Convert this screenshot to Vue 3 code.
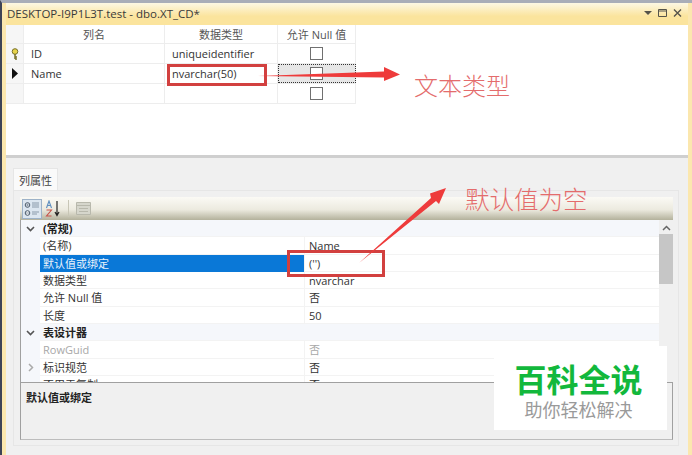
<script setup>
const columns = [
  { name: 'ID', type: 'uniqueidentifier', key: true },
  { name: 'Name', type: 'nvarchar(50)', current: true },
  { name: '', type: '' }
];

const props = [
  { label: '(常规)', group: true, open: true },
  { label: '(名称)', value: 'Name' },
  { label: '默认值或绑定', value: "('')", selected: true },
  { label: '数据类型', value: 'nvarchar' },
  { label: '允许 Null 值', value: '否' },
  { label: '长度', value: '50' },
  { label: '表设计器', group: true, open: true },
  { label: 'RowGuid', value: '否', muted: true },
  { label: '标识规范', value: '否', closed: true },
  { label: '不用于复制', value: '否' }
];
</script>

<template>
  <div class="screen">
    <div class="window">
      <div class="titlebar">
        <span class="title">DESKTOP-I9P1L3T.test - dbo.XT_CD*</span>
        <div class="controls">
          <svg width="8" height="4" viewBox="0 0 8 4"><path d="M0 0h8L4 4z" fill="#55534a" /></svg>
          <svg width="9" height="8" viewBox="0 0 9 8"><path d="M.5.500h8v7h-8zM.5 2h8" fill="none" stroke="#55534a" /></svg>
          <svg width="9" height="8" viewBox="0 0 9 8"><path d="M1 .5l7 7M8 .5l-7 7" fill="none" stroke="#55534a" stroke-width="1.400" /></svg>
        </div>
      </div>

      <div class="designer">
        <div class="table">
          <div class="row head">
            <div class="marker"></div>
            <div class="cell c-name center">列名</div>
            <div class="cell c-type center">数据类型</div>
            <div class="cell c-null center">允许 Null 值</div>
          </div>
          <div v-for="col in columns" :key="col.name" class="row">
            <div class="marker">
              <svg v-if="col.key" width="8" height="12" viewBox="0 0 8 12">
                <circle cx="4" cy="3.500" r="2.800" fill="#e8d44a" stroke="#77702a" />
                <path d="M4 6v5M4 9h2M4 11h2" stroke="#77702a" stroke-width="1.500" fill="none" />
              </svg>
              <svg v-if="col.current" width="7" height="11" viewBox="0 0 7 11"><path d="M1 0l6 5.500L1 11z" fill="#111" /></svg>
            </div>
            <div class="cell c-name">{{ col.name }}</div>
            <div class="cell c-type">{{ col.type }}</div>
            <div class="cell c-null center" :class="{ focus: col.current }"><span class="check"></span></div>
          </div>
        </div>
      </div>

      <div class="splitter"></div>

      <div class="lower">
        <div class="tab">列属性</div>
        <div class="tab-panel">
          <div class="toolbar">
            <div class="tool active">
              <svg width="16" height="16" viewBox="0 0 16 16">
                <circle cx="3.500" cy="4" r="2.300" fill="#fff" stroke="#456" />
                <circle cx="3.500" cy="12" r="2.300" fill="#fff" stroke="#456" />
                <path d="M2 4h3M3.500 2.500v3M2 12h3M8 2h7M8 4h7M8 6h7M8 11h7M8 13h5" stroke="#8a9aaa" fill="none" />
              </svg>
            </div>
            <div class="tool">
              <svg width="18" height="17" viewBox="0 0 18 17">
                <path d="M1.500 8l2.500-7 2.500 7M2.500 5.500h3" stroke="#5f8fc0" stroke-width="1.100" fill="none" />
                <path d="M1.500 10h5l-5 6h5" stroke="#c8524a" stroke-width="1.100" fill="none" />
                <path d="M12 1v14M10 12l2 3.500 2-3.500" stroke="#222" stroke-width="1.200" fill="none" />
              </svg>
            </div>
            <div class="sep"></div>
            <div class="tool">
              <svg width="15" height="13" viewBox="0 0 15 13">
                <path d="M.500.500h14v12H.500z" fill="#d6d6cc" stroke="#b8b8ac" />
                <path d="M.500 3.500h14M3 6.500h9M3 9.500h9" stroke="#b8b8ac" fill="none" />
              </svg>
            </div>
          </div>

          <div class="grid-wrap">
            <div class="prop-grid">
              <div
                v-for="p in props"
                :key="p.label"
                class="prop"
                :class="{ group: p.group, selected: p.selected, muted: p.muted }"
              >
                <div class="gutter">
                  <svg v-if="p.open" width="9" height="6" viewBox="0 0 9 6"><path d="M1 1l3.500 3.500L8 1" fill="none" stroke="#555" stroke-width="1.600" /></svg>
                  <svg v-if="p.closed" width="6" height="9" viewBox="0 0 6 9"><path d="M1 1l3.500 3.500L1 8" fill="none" stroke="#aaa" stroke-width="1.500" /></svg>
                </div>
                <div class="label">{{ p.label }}</div>
                <div class="value">{{ p.value }}</div>
              </div>
            </div>
            <div class="scrollbar">
              <svg width="9" height="6" viewBox="0 0 9 6"><path d="M1 5l3.500-3.500L8 5" fill="none" stroke="#666" stroke-width="1.500" /></svg>
              <div class="thumb"></div>
            </div>
          </div>

          <div class="desc">默认值或绑定</div>
        </div>
      </div>
    </div>

    <!-- annotations drawn on top of the screenshot -->
    <div class="redbox box-type"></div>
    <div class="redbox box-default"></div>
    <svg class="arrows" width="692" height="455" viewBox="0 0 692 455">
      <path d="M258 76L384 71.500V67L400 74.500L384 81V77.500z" fill="#ee3b3b" />
      <path d="M359 263L431 198L430 193.500L446 188L439 204L436 201z" fill="#ee3b3b" />
    </svg>
    <div class="note note-type">文本类型</div>
    <div class="note note-default">默认值为空</div>

    <div class="watermark">
      <div class="wm-main">百科全说</div>
      <div class="wm-sub">助你轻松解决</div>
    </div>
  </div>
</template>

<style scoped>
.screen {
  position: relative;
  width: 692px;
  height: 455px;
  overflow: hidden;
  box-sizing: border-box;
  padding: 0 4px 0 4px;
  background: #fbe7ae;
  border-left: 2px solid #3d4356;
  border-top: 3px solid #a9adb8;
  font-family: "Open Sans", "Noto Sans CJK SC", sans-serif;
  font-size: 11px;
  color: #333;
}

.window {
  display: flex;
  flex-direction: column;
  height: 452px;
}

.titlebar {
  display: flex;
  align-items: center;
  justify-content: space-between;
  height: 22px;
  flex: none;
  padding: 0 6px 2px 1px;
  box-sizing: border-box;
  background: linear-gradient(#fdf8e4, #fbe49d 60%);
  font-size: 11.5px;
  color: #3a3a3a;
}

.controls {
  display: flex;
  align-items: center;
  gap: 6px;
}

.designer {
  flex: none;
  height: 130px;
  background: #fff;
}

.table {
  width: 350px;
}

.row {
  display: flex;
  height: 20px;
  border-bottom: 1px solid #ededed;
  box-sizing: border-box;
}

.row.head {
  height: 19px;
  background: #fff;
  color: #555;
}

.marker {
  width: 18px;
  flex: none;
  display: flex;
  align-items: center;
  justify-content: center;
  background: #f6f6f6;
  border-right: 1px solid #ededed;
  box-sizing: border-box;
}

.cell {
  display: flex;
  align-items: center;
  padding-left: 7px;
  box-sizing: border-box;
  border-right: 1px solid #ededed;
}

.center {
  justify-content: center;
  padding-left: 0;
}

.c-name { width: 141px; }
.c-type { width: 113px; }
.c-null { width: 78px; }

.focus {
  background: #e6e6e6;
  outline: 1px dotted #333;
  outline-offset: -1px;
}

.check {
  width: 11px;
  height: 11px;
  background: #fff;
  border: 1px solid #707070;
}

.splitter {
  flex: none;
  height: 3px;
  background: #cfcfcf;
}

.lower {
  flex: 1;
  background: #f0f0f0;
  padding: 10px 9px 0 7px;
}

.tab {
  width: 45px;
  height: 22px;
  box-sizing: border-box;
  display: flex;
  align-items: center;
  justify-content: center;
  background: #fafafa;
  border: 1px solid #e6e6e6;
  border-bottom: none;
  color: #444;
}

.tab-panel {
  height: 256px;
  box-sizing: border-box;
  padding: 6px 5px 5px 6px;
  border: 1px solid #e6e6e6;
  background: #f0f0f0;
}

.toolbar {
  display: flex;
  align-items: center;
  gap: 2px;
  height: 23px;
  padding-left: 2px;
  background: linear-gradient(#fbfaf5, #eceadf 55%, #b3b19c);
  box-sizing: border-box;
}

.tool {
  display: flex;
  align-items: center;
  justify-content: center;
  width: 20px;
  height: 20px;
  box-sizing: border-box;
}

.tool.active {
  background: #dce6f0;
  border: 1px solid #9db2c8;
}

.sep {
  width: 1px;
  height: 17px;
  margin: 0 2px;
  background: #c8c6b6;
}

.grid-wrap {
  display: flex;
  height: 163px;
  overflow: hidden;
  background: #fff;
  border-left: 1px solid #a0a0a0;
  border-bottom: 1px solid #a0a0a0;
  box-sizing: border-box;
}

.prop-grid {
  flex: 1;
  min-width: 0;
}

.prop {
  display: flex;
  height: 17.33px;
  line-height: 18px;
  box-shadow: inset 0 -1px 0 #f3f3f3;
}

.gutter {
  width: 19px;
  flex: none;
  display: flex;
  align-items: center;
  justify-content: center;
  background: #f5f7fb;
}

.label {
  width: 264px;
  flex: none;
  padding-left: 3px;
  box-sizing: border-box;
}

.value {
  flex: 1;
  padding-left: 4px;
  border-left: 1px solid #f3f3f3;
}

.prop.group {
  background: #f5f7fb;
  font-weight: 700;
  color: #222;
}

.prop.group .value {
  border-left: none;
}

.prop.selected .label {
  background: #0a78d7;
  color: #e8f2fb;
}

.prop.muted {
  color: #a8a8a8;
}

.scrollbar {
  width: 14px;
  flex: none;
  display: flex;
  flex-direction: column;
  align-items: center;
  padding-top: 5px;
  box-sizing: border-box;
  background: #f0f0f0;
}

.thumb {
  width: 100%;
  height: 50px;
  margin-top: 3px;
  background: #c6c6c6;
}

.desc {
  height: 57px;
  box-sizing: border-box;
  padding: 6px 5px;
  background: #f0f0f0;
  border: 1px solid #a0a0a0;
  border-top: none;
  border-bottom-color: #bdbdbd;
  font-weight: 700;
  color: #222;
}

/* annotations */
.redbox {
  position: absolute;
  box-sizing: border-box;
  border: 3px solid #d2403f;
}

.box-type {
  left: 165px;
  top: 61px;
  width: 100px;
  height: 22px;
}

.box-default {
  left: 285px;
  top: 247px;
  width: 98px;
  height: 27px;
}

.arrows {
  position: absolute;
  left: -2px;
  top: -3px;
}

.note {
  position: absolute;
  color: #e46c6c;
  font-family: "Noto Sans CJK SC", sans-serif;
  font-weight: 300;
  line-height: 1;
  white-space: nowrap;
}

.note-type {
  left: 412px;
  top: 70px;
  font-size: 24px;
}

.note-default {
  left: 463px;
  top: 184px;
  font-size: 24.500px;
}

.watermark {
  position: absolute;
  left: 492px;
  top: 343px;
  width: 173px;
  height: 84px;
  padding-right: 4px;
  box-sizing: border-box;
  display: flex;
  flex-direction: column;
  align-items: center;
  background: #fff;
}

.wm-main {
  margin-top: 15px;
  font-family: "Noto Sans CJK SC", sans-serif;
  font-size: 32px;
  font-weight: 700;
  line-height: 34px;
  color: #12b83c;
}

.wm-sub {
  margin-top: 3px;
  font-family: "Noto Sans CJK SC", sans-serif;
  font-size: 18px;
  line-height: 22px;
  color: #9a9a9a;
}
</style>
